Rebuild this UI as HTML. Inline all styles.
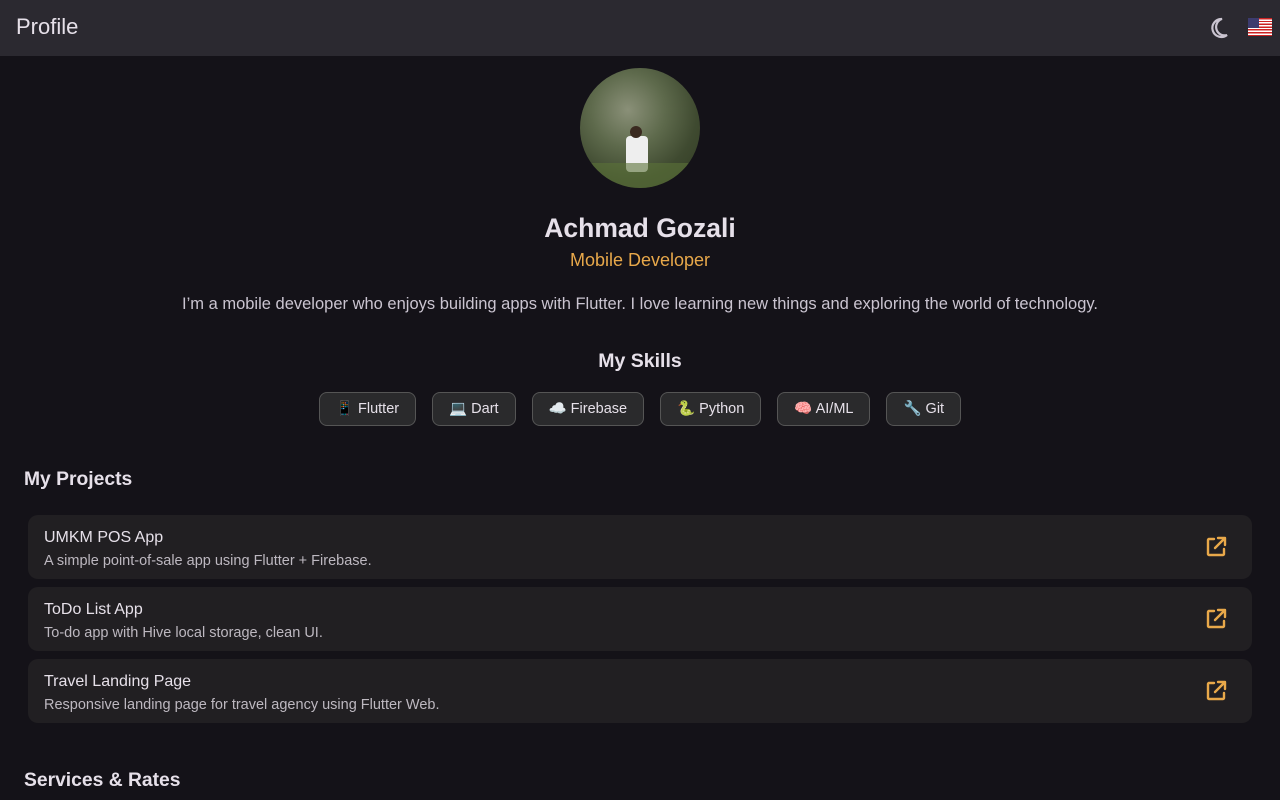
<!DOCTYPE html>
<html><head><meta charset="utf-8"><style>
*{box-sizing:border-box;margin:0;padding:0}
body{width:1280px;height:800px;overflow:hidden;background:#141218;color:#e6e0e9;font-family:"Liberation Sans","Noto Sans CJK SC",sans-serif}
.bar{height:56px;background:#2b2930;position:relative}
.bar .t{position:absolute;left:16px;top:14px;font-size:22px;color:#e6e0e9}
.av{position:absolute;left:580px;top:68px;width:120px;height:120px;border-radius:50%;background:radial-gradient(circle at 40% 35%,#8a9078 0%,#5e6a4c 35%,#3f4a30 65%,#2f3a22 100%);overflow:hidden}
.c{position:absolute;left:0;width:1280px;text-align:center}
.chips{position:absolute;top:392px;left:0;width:1280px;display:flex;justify-content:center;gap:16px}
.chip{height:34px;padding:0 16px;border:1px solid #555;border-radius:8px;background:#2a2a2c;font-size:14.5px;line-height:32px;color:#e6e0e9}
h3{position:absolute;left:24px;font-size:19.3px;font-weight:bold;color:#e6e0e9}
.card{position:absolute;left:28px;width:1224px;height:64px;background:#211f22;border-radius:10px}
.card .n{position:absolute;left:16px;top:14px;font-size:16px;color:#e6e0e9}
.card .d{position:absolute;left:16px;top:38px;font-size:14.5px;color:#bdb8c0}
.card svg{position:absolute;right:24px;top:20px}
</style></head><body>
<div class="bar"><div class="t">Profile</div>
<svg style="position:absolute;left:1208px;top:16px" width="22" height="24" viewBox="0 0 22 24"><path d="M14 3A9 9 0 1 0 19 19A8 8 0 0 1 14 3Z" fill="none" stroke="#cac4d0" stroke-width="2.2"/></svg>
<div style="position:absolute;left:1248px;top:18px;width:24px;height:18px;background:repeating-linear-gradient(#c22 0 1.4px,#fff 1.4px 2.8px)"><div style="width:11px;height:9.5px;background:#3c3b6e"></div></div>
</div>
<div class="av"><div style="position:absolute;left:46px;top:68px;width:22px;height:36px;background:#eee;border-radius:4px"></div><div style="position:absolute;left:50px;top:58px;width:12px;height:12px;border-radius:50%;background:#3a2a20"></div><div style="position:absolute;left:0;top:95px;width:120px;height:30px;background:#5b7338;opacity:.6"></div></div>
<div class="c" style="top:213px;font-size:26.5px;font-weight:bold">Achmad Gozali</div>
<div class="c" style="top:250px;font-size:18px;color:#e8a84a">Mobile Developer</div>
<div class="c" style="top:295px;font-size:16.5px;color:#cac4d0">I’m a mobile developer who enjoys building apps with Flutter. I love learning new things and exploring the world of technology.</div>
<div class="c" style="top:350px;font-size:19.5px;font-weight:bold">My Skills</div>
<div class="chips"><div class="chip">📱 Flutter</div><div class="chip">💻 Dart</div><div class="chip">☁️ Firebase</div><div class="chip">🐍 Python</div><div class="chip">🧠 AI/ML</div><div class="chip">🔧 Git</div></div>
<h3 style="top:469px">My Projects</h3>
<div class="card" style="top:515px"><div class="n">UMKM POS App</div><div class="d">A simple point-of-sale app using Flutter + Firebase.</div><svg width="24" height="24" viewBox="0 0 24 24" fill="none" stroke="#e8a84a" stroke-width="2.4" stroke-linecap="round" stroke-linejoin="round"><path d="M10 4H5a1 1 0 0 0-1 1v14a1 1 0 0 0 1 1h14a1 1 0 0 0 1-1v-5"/><path d="M14 3h7v7M21 3L11 13"/></svg></div>
<div class="card" style="top:587px"><div class="n">ToDo List App</div><div class="d">To-do app with Hive local storage, clean UI.</div><svg width="24" height="24" viewBox="0 0 24 24" fill="none" stroke="#e8a84a" stroke-width="2.4" stroke-linecap="round" stroke-linejoin="round"><path d="M10 4H5a1 1 0 0 0-1 1v14a1 1 0 0 0 1 1h14a1 1 0 0 0 1-1v-5"/><path d="M14 3h7v7M21 3L11 13"/></svg></div>
<div class="card" style="top:659px"><div class="n">Travel Landing Page</div><div class="d">Responsive landing page for travel agency using Flutter Web.</div><svg width="24" height="24" viewBox="0 0 24 24" fill="none" stroke="#e8a84a" stroke-width="2.4" stroke-linecap="round" stroke-linejoin="round"><path d="M10 4H5a1 1 0 0 0-1 1v14a1 1 0 0 0 1 1h14a1 1 0 0 0 1-1v-5"/><path d="M14 3h7v7M21 3L11 13"/></svg></div>
<h3 style="top:770px">Services &amp; Rates</h3>
</body></html>
